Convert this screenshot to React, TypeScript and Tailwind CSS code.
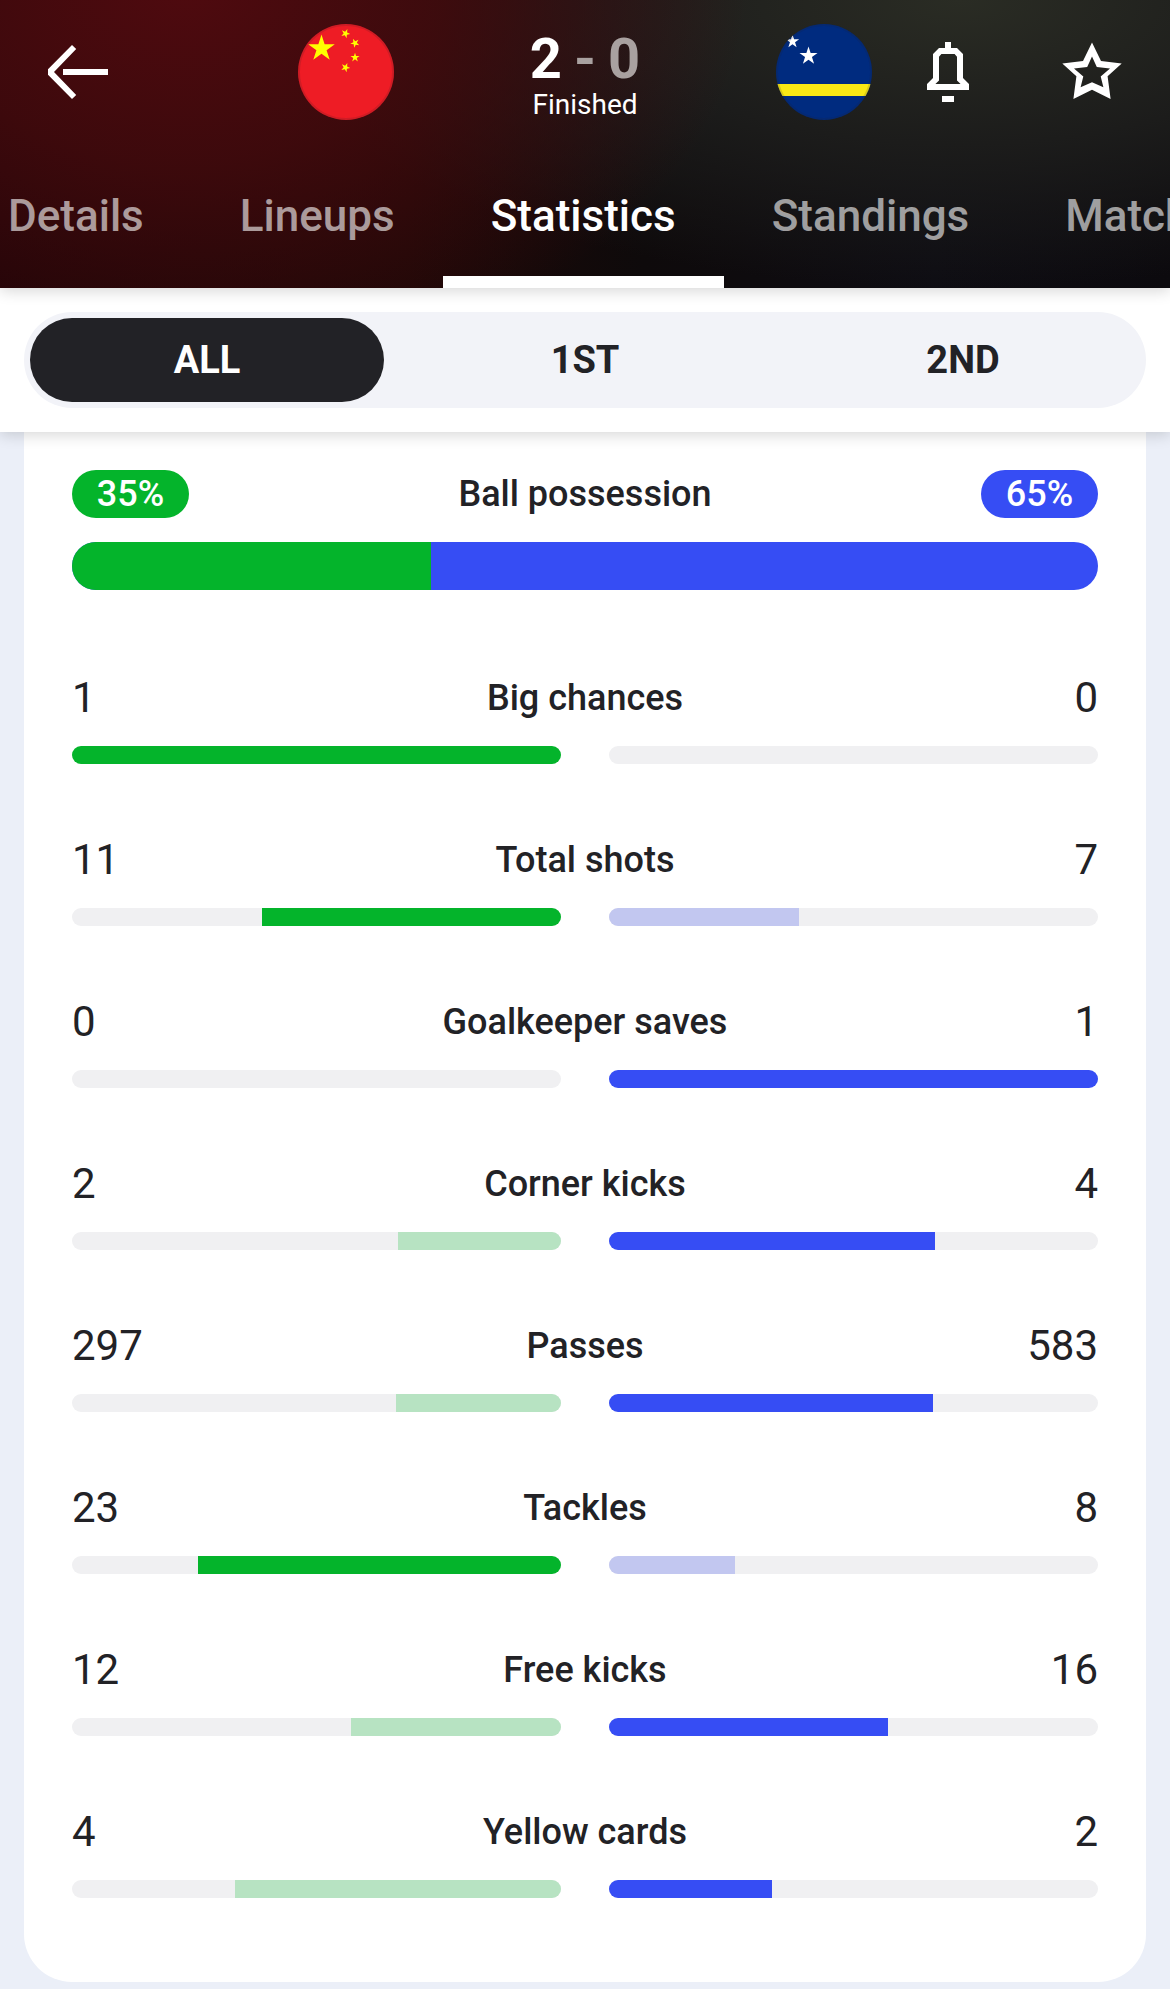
import React from "react";

type Tone = "strong" | "soft";

interface Stat {
  label: string;
  home: number;
  away: number;
  homeTone: Tone;
  awayTone: Tone;
}

const stats: Stat[] = [
  { label: "Big chances", home: 1, away: 0, homeTone: "strong", awayTone: "soft" },
  { label: "Total shots", home: 11, away: 7, homeTone: "strong", awayTone: "soft" },
  { label: "Goalkeeper saves", home: 0, away: 1, homeTone: "soft", awayTone: "strong" },
  { label: "Corner kicks", home: 2, away: 4, homeTone: "soft", awayTone: "strong" },
  { label: "Passes", home: 297, away: 583, homeTone: "soft", awayTone: "strong" },
  { label: "Tackles", home: 23, away: 8, homeTone: "strong", awayTone: "soft" },
  { label: "Free kicks", home: 12, away: 16, homeTone: "soft", awayTone: "strong" },
  { label: "Yellow cards", home: 4, away: 2, homeTone: "soft", awayTone: "strong" },
];

const tabs = ["Details", "Lineups", "Statistics", "Standings", "Matches"];
const periods = ["ALL", "1ST", "2ND"];

function starPoints(cx: number, cy: number, r: number, turn = 0) {
  return Array.from({ length: 10 }, (_, i) => {
    const radius = i % 2 === 0 ? r : r * 0.382;
    const a = ((turn - 90 + i * 36) * Math.PI) / 180;
    return `${(cx + radius * Math.cos(a)).toFixed(2)},${(cy + radius * Math.sin(a)).toFixed(2)}`;
  }).join(" ");
}

function ChinaFlag() {
  return (
    <svg viewBox="0 0 96 96" className="size-24 rounded-full" role="img" aria-label="China">
      <rect width="96" height="96" fill="#ee1c25" />
      <g fill="#ffff00">
        <polygon points={starPoints(23.5, 24.5, 14)} />
        <polygon points={starPoints(47.5, 9.5, 4.8, 23)} />
        <polygon points={starPoints(57, 19, 4.8, 46)} />
        <polygon points={starPoints(57, 33.5, 4.8, 0)} />
        <polygon points={starPoints(47.5, 43.5, 4.8, 23)} />
      </g>
      <circle cx="48" cy="48" r="47" fill="none" stroke="#222226" strokeOpacity="0.15" strokeWidth="2" />
    </svg>
  );
}

function CuracaoFlag() {
  return (
    <svg viewBox="0 0 96 96" className="size-24 rounded-full" role="img" aria-label="Curaçao">
      <rect width="96" height="96" fill="#002b7f" />
      <rect y="60" width="96" height="12" fill="#f9e814" />
      <polygon points={starPoints(16.5, 17.5, 7)} fill="#fff" />
      <polygon points={starPoints(32.5, 32, 9.5)} fill="#fff" />
      <circle cx="48" cy="48" r="47" fill="none" stroke="#222226" strokeOpacity="0.15" strokeWidth="2" />
    </svg>
  );
}

function BackIcon() {
  return (
    <svg viewBox="0 0 24 24" className="size-[72px]" fill="currentColor" aria-hidden="true">
      <path d="M7 11h15v2H7zM10 3l1.4 1.3L4 12l7.4 7.7L10 21 2 12.9V11.1z" />
    </svg>
  );
}

function BellIcon() {
  return (
    <svg viewBox="0 0 24 24" className="size-[72px]" fill="currentColor" aria-hidden="true">
      <path
        fillRule="evenodd"
        d="M11 2h2v2h2l2 2v8l2 2v2H5v-2l2-2V6l2-2h2zM9.8 6 9 6.9v7.9L7.8 16h8.4L15 14.8V6.9L14.2 6z"
      />
      <path d="M10 20h4v2h-4z" />
    </svg>
  );
}

function StarIcon() {
  return (
    <svg viewBox="0 0 24 24" className="size-[72px]" fill="currentColor" aria-hidden="true">
      <path
        fillRule="evenodd"
        d="M12 2.2 15 8.3l6.9.9-4.7 4.2 1 7.6-6.2-3.1L5.8 21l1-7.6-4.7-4.2L9 8.3zM12 6.8l-1.6 3.5-4.4.5 3.1 2.7-.9 3.6 3.8-1.7 3.8 1.7-.9-3.6 3.1-2.7-4.4-.5z"
      />
    </svg>
  );
}

function Header() {
  return (
    <header className="relative z-20 bg-[#0e0b0e] bg-[radial-gradient(ellipse_48%_135%_at_16%_-5%,#4f0a0f_0%,#420a0ddd_45%,#20040600_100%),radial-gradient(ellipse_60%_100%_at_82%_0%,#2a2c24_0%,#1c1c1b_50%,#0e0e1300_100%),linear-gradient(to_right,#1f0407_0%,#1d0807_35%,#0e0a0b_55%,#0e0d13_80%,#0c0a0e_100%)] text-white shadow-[0_3px_14px_rgba(0,0,0,0.16)]">
      <div className="flex h-36 items-center">
        <div className="flex flex-1 pl-[42px]">
          <button type="button" aria-label="Back">
            <BackIcon />
          </button>
        </div>
        <div className="flex w-[49%] items-center justify-between">
          <ChinaFlag />
          <div className="flex flex-col items-center pt-1.5">
            <div className="flex items-center gap-3 text-[56px] leading-[60px] font-bold">
              <span>2</span>
              <span className="text-[#a9a1a0]">-</span>
              <span className="text-[#a9a1a0]">0</span>
            </div>
            <div className="text-[28px] leading-8">Finished</div>
          </div>
          <CuracaoFlag />
        </div>
        <div className="flex flex-1 justify-end gap-[72px] pr-[42px]">
          <button type="button" aria-label="Notifications">
            <BellIcon />
          </button>
          <button type="button" aria-label="Favourite">
            <StarIcon />
          </button>
        </div>
      </div>
      <nav className="flex h-36 justify-start overflow-hidden" aria-label="Match sections">
        <div className="-ml-10 flex">
          {tabs.map((tab) => {
            const active = tab === "Statistics";
            return (
              <a
                key={tab}
                href={`#${tab.toLowerCase()}`}
                aria-current={active ? "page" : undefined}
                className={
                  active
                    ? "flex items-center border-y-12 border-t-transparent border-b-white px-12 text-[44px] font-medium text-white"
                    : "flex items-center px-12 text-[44px] font-medium text-white/60"
                }
              >
                {tab}
              </a>
            );
          })}
        </div>
      </nav>
    </header>
  );
}

function PeriodSwitch() {
  return (
    <div className="relative z-10 bg-white p-6 shadow-[0_3px_14px_rgba(0,0,0,0.16)]">
      <div className="grid h-24 grid-cols-3 gap-6 rounded-full bg-[#f2f3f8] p-1.5">
        {periods.map((period) => (
          <button
            key={period}
            type="button"
            aria-pressed={period === "ALL"}
            className={
              period === "ALL"
                ? "rounded-full bg-[#222226] text-[38px] font-bold text-white"
                : "rounded-full text-[38px] font-bold text-[#222226]"
            }
          >
            {period}
          </button>
        ))}
      </div>
    </div>
  );
}

function Possession({ home, away }: { home: number; away: number }) {
  return (
    <section>
      <div className="flex h-12 items-center justify-between text-[36px] font-medium">
        <span className="flex h-12 min-w-[117px] items-center justify-center rounded-full bg-[#04b42b] px-5 text-white">
          {home}%
        </span>
        <h2>Ball possession</h2>
        <span className="flex h-12 min-w-[117px] items-center justify-center rounded-full bg-[#364df4] px-5 text-white">
          {away}%
        </span>
      </div>
      <div className="mt-6 flex h-12 overflow-hidden rounded-full bg-[#364df4]">
        <div className="bg-[#04b42b]" style={{ width: `${home}%` }} />
      </div>
    </section>
  );
}

function StatRow({ label, home, away, homeTone, awayTone }: Stat) {
  const total = home + away;
  return (
    <section>
      <div className="grid grid-cols-[1fr_auto_1fr] items-center">
        <span className="text-[42px] leading-12">{home}</span>
        <h2 className="text-[36px] leading-12 font-medium">{label}</h2>
        <span className="text-right text-[42px] leading-12">{away}</span>
      </div>
      <div className="mt-6 grid grid-cols-2 gap-12">
        <div className="flex h-[18px] justify-end overflow-hidden rounded-full bg-[#f0f0f2]">
          <div
            className={homeTone === "strong" ? "bg-[#04b42b]" : "bg-[#b7e3c2]"}
            style={{ width: `${(home / total) * 100}%` }}
          />
        </div>
        <div className="flex h-[18px] overflow-hidden rounded-full bg-[#f0f0f2]">
          <div
            className={awayTone === "strong" ? "bg-[#364df4]" : "bg-[#c2c7f0]"}
            style={{ width: `${(away / total) * 100}%` }}
          />
        </div>
      </div>
    </section>
  );
}

export default function App() {
  return (
    <div className="min-h-screen overflow-x-hidden bg-[#ebeff8] font-['Roboto',sans-serif] text-[#222226]">
      <Header />
      <PeriodSwitch />
      <main className="mx-6 rounded-b-[48px] bg-white px-12 pt-[38px] pb-[84px]">
        <Possession home={35} away={65} />
        <div className="mt-[84px] flex flex-col gap-[72px]">
          {stats.map((stat) => (
            <StatRow key={stat.label} {...stat} />
          ))}
        </div>
      </main>
    </div>
  );
}
